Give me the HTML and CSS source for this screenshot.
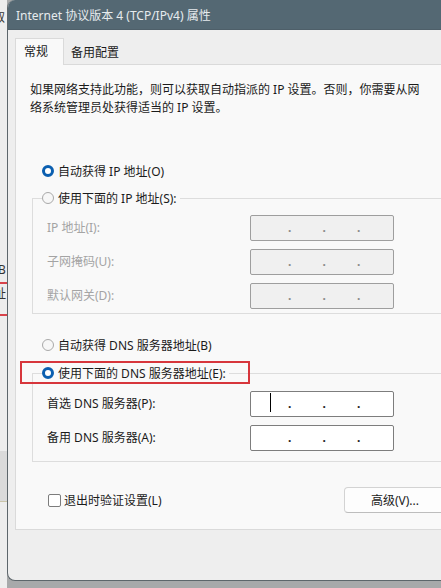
FILE: index.html
```html
<!DOCTYPE html>
<html lang="zh-CN">
<head>
<meta charset="utf-8">
<title>Internet 协议版本 4 (TCP/IPv4) 属性</title>
<link rel="stylesheet" href="styles.css">
</head>
<body>
<div class="desk">
  <div class="behind">
    <span class="frag frag-top">取</span>
    <span class="frag frag-b">B</span>
    <div class="redline first"></div>
    <span class="frag frag-zhi">址</span>
    <div class="redline second"></div>
    <div class="grayband"></div>
  </div>
  <div class="dialog">
    <div class="titlebar">Internet 协议版本 4 (TCP/IPv4) 属性</div>
    <div class="dbody">
      <div class="tabs">
        <div class="tab active">常规</div>
        <div class="tab">备用配置</div>
      </div>
      <div class="panel">
        <p class="desc">如果网络支持此功能，则可以获取自动指派的 IP 设置。否则，你需要从网<br>络系统管理员处获得适当的 IP 设置。</p>
        <div class="radio-row row-ip-auto"><span class="radio on"></span><span>自动获得 IP 地址(O)</span></div>
        <fieldset class="group group-ip">
          <legend><span class="radio off"></span><span>使用下面的 IP 地址(S):</span></legend>
          <div class="grid">
            <span class="lbl dis">IP 地址(I):</span>
            <div class="ipbox dis"><span>.</span><span>.</span><span>.</span></div>
            <span class="lbl dis">子网掩码(U):</span>
            <div class="ipbox dis"><span>.</span><span>.</span><span>.</span></div>
            <span class="lbl dis">默认网关(D):</span>
            <div class="ipbox dis"><span>.</span><span>.</span><span>.</span></div>
          </div>
        </fieldset>
        <div class="radio-row row-dns-auto"><span class="radio off"></span><span>自动获得 DNS 服务器地址(B)</span></div>
        <fieldset class="group group-dns">
          <legend><span class="radio on"></span><span>使用下面的 DNS 服务器地址(E):</span></legend>
          <div class="grid">
            <span class="lbl">首选 DNS 服务器(P):</span>
            <div class="ipbox"><i class="caret"></i><span>.</span><span>.</span><span>.</span></div>
            <span class="lbl">备用 DNS 服务器(A):</span>
            <div class="ipbox"><span>.</span><span>.</span><span>.</span></div>
          </div>
        </fieldset>
        <div class="footer-row">
          <label class="chk"><span class="checkbox"></span><span>退出时验证设置(L)</span></label>
          <button class="btn">高级(V)...</button>
        </div>
        <div class="annot"></div>
      </div>
    </div>
  </div>
</div>
</body>
</html>
```
FILE: styles.css
```css
html, body {
  margin: 0;
  padding: 0;
  width: 441px;
  height: 588px;
  overflow: hidden;
}
body {
  background: #a7a9aa;
  font-family: "Noto Sans", "Noto Sans CJK SC", sans-serif;
  font-size: 12px;
  color: #1b1b1b;
}
.desk {
  display: flex;
  height: 588px;
}
.behind {
  width: 7px;
  flex-shrink: 0;
  background: #ededed;
  overflow: hidden;
  display: flex;
  flex-direction: column;
}
.frag {
  display: block;
  font-size: 12px;
  line-height: 14px;
  color: #333;
  margin-left: -5px;
  white-space: nowrap;
}
.frag-top { margin-top: 11px; margin-left: -7px; }
.frag-b { margin-top: 238px; margin-left: -2px; }
.redline {
  height: 2px;
  background: #d8434a;
}
.redline.first { margin-top: 5px; }
.frag-zhi { margin-top: 3px; margin-left: -6px; }
.redline.second { margin-top: 13px; }
.grayband {
  margin-top: 135px;
  height: 50px;
  background: #dadada;
  border-bottom: 1px solid #cbc6aa;
}
.dialog {
  width: 470px;
  height: 581px;
  flex-shrink: 0;
  box-sizing: border-box;
  border-left: 1px solid #5d666b;
  border-bottom: 1px solid #5d666b;
  border-radius: 8px 0 0 8px;
  overflow: hidden;
  background: #eeeeee;
  display: flex;
  flex-direction: column;
}
.titlebar {
  height: 30px;
  line-height: 31px;
  background: #546873;
  color: #e6ebee;
  padding-left: 8px;
  white-space: nowrap;
  border-bottom: 1px solid #4e5f69;
  box-sizing: border-box;
}
.dbody {
  padding: 8px 0 0 7px;
  flex: 1;
}
.tabs {
  display: flex;
  height: 26px;
  position: relative;
  z-index: 1;
}
.tab {
  height: 26px;
  box-sizing: border-box;
  padding: 2px 7px 0 7px;
  line-height: 26px;
  white-space: nowrap;
}
.tab.active {
  width: 49px;
  padding: 0 0 0 8px;
  line-height: 25px;
  background: #f9f9f9;
  border: 1px solid #dadada;
  border-bottom: none;
  height: 27px;
}
.panel {
  position: relative;
  height: 466px;
  box-sizing: border-box;
  background: #f9f9f9;
  border: 1px solid #dadada;
  border-right: none;
}
.desc {
  margin: 16px 0 0 0;
  padding-left: 14px;
  line-height: 18px;
  white-space: nowrap;
}
.radio-row {
  display: flex;
  align-items: center;
  height: 20px;
  margin-left: 26px;
  white-space: nowrap;
}
.row-ip-auto { margin-top: 44px; }
.row-dns-auto { margin-top: 21px; }
.radio {
  width: 12px;
  height: 12px;
  box-sizing: border-box;
  border-radius: 50%;
  margin-right: 4px;
  flex-shrink: 0;
}
.radio.on {
  border: 3px solid #0b5fb0;
  background: #ffffff;
}
.radio.off {
  border: 1px solid #a9a9a9;
  background: #f7f7f7;
}
.group {
  margin: 7px 4px 0 16px;
  padding: 0 0 4px 14px;
  border: 1px solid #dddddd;
  min-width: 0;
}
.group legend {
  display: flex;
  align-items: center;
  height: 20px;
  padding: 0 3px 0 0;
  margin-left: -5px;
  white-space: nowrap;
}
.group-dns {
  margin-top: 8px;
  padding-bottom: 10px;
}
.grid {
  display: grid;
  grid-template-columns: 203px 144px;
  grid-auto-rows: 26px;
  row-gap: 8px;
  margin-top: 7px;
  align-items: center;
}
.group-dns .grid { margin-top: 8px; }
.lbl {
  white-space: nowrap;
  line-height: 20px;
}
.lbl.dis { color: #a4a4a4; }
.ipbox {
  position: relative;
  height: 26px;
  box-sizing: border-box;
  border: 1px solid #7d7d7d;
  border-radius: 2px;
  background: #ffffff;
  display: flex;
  padding-left: 37px;
  line-height: 24px;
  color: #222;
}
.ipbox span {
  width: 34.5px;
  font-weight: bold;
}
.ipbox.dis {
  background: #f0f0f0;
  border-color: #9e9e9e;
  color: #8a8a8a;
}
.caret {
  position: absolute;
  left: 19px;
  top: 1px;
  width: 1px;
  height: 19px;
  background: #000;
}
.footer-row {
  display: flex;
  align-items: center;
  justify-content: space-between;
  margin: 25px 31px 0 32px;
  height: 26px;
}
.chk {
  display: flex;
  align-items: center;
  white-space: nowrap;
}
.checkbox {
  width: 13px;
  height: 13px;
  box-sizing: border-box;
  border: 1px solid #7c7c7c;
  border-radius: 2px;
  background: #fff;
  margin-right: 3px;
}
.btn {
  width: 102px;
  height: 26px;
  box-sizing: border-box;
  background: #fdfdfd;
  border: 1px solid #d3d3d3;
  border-bottom-color: #bdbdbd;
  border-radius: 4px;
  font-family: inherit;
  font-size: 12px;
  color: #1b1b1b;
  padding: 0;
}
.annot {
  position: absolute;
  left: 4px;
  top: 296px;
  width: 230px;
  height: 23px;
  box-sizing: border-box;
  border: 2px solid #d7363c;
  pointer-events: none;
}
```
